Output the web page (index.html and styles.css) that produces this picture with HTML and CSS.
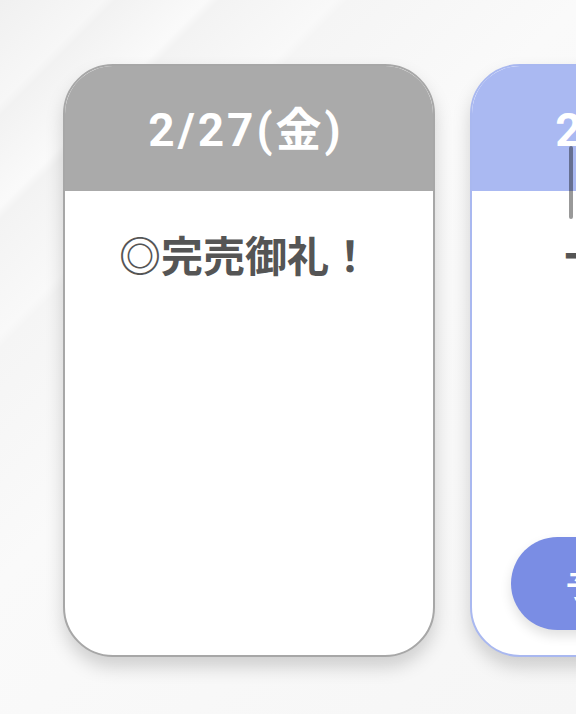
FILE: index.html
```html
<!DOCTYPE html>
<html lang="ja">
<head>
<meta charset="utf-8">
<title>公演日程</title>
<link rel="stylesheet" href="styles.css">
</head>
<body>
<main class="track">
  <article class="card card--sold">
    <header class="card__head">2/27(金)</header>
    <div class="card__body">
      <p class="card__msg">◎完売御礼！</p>
    </div>
  </article>
  <article class="card card--open">
    <header class="card__head">2/28(土)</header>
    <div class="card__body">
      <p class="card__msg">一般受付!</p>
      <a class="card__btn" href="#">予約はこちら</a>
    </div>
    <span class="card__cursor"></span>
  </article>
</main>
</body>
</html>
```
FILE: styles.css
```css
html, body {
  margin: 0;
  padding: 0;
  width: 576px;
  height: 714px;
  overflow: hidden;
}
body {
  font-family: "Noto Sans CJK JP", "Noto Sans", sans-serif;
  background:
    linear-gradient(135deg,
      #f0f0f0 0%, #f7f7f7 8%, #f2f2f2 9%, #fafafa 16%,
      #f3f3f3 17%, #f9f9f9 26%, #f5f5f5 27%, #fafafa 45%,
      #f8f8f8 70%, #f6f6f6 100%);
}
.track {
  display: flex;
  gap: 35px;
  padding: 64px 0 0 63px;
  width: max-content;
}
.card {
  position: relative;
  box-sizing: border-box;
  width: 372px;
  height: 593px;
  border: 2px solid #a7a7a7;
  border-radius: 50px;
  background: #fff;
  overflow: hidden;
  display: flex;
  flex-direction: column;
  box-shadow: 0 10px 18px rgba(0, 0, 0, 0.17);
}
.card__head {
  height: 125px;
  flex: none;
  display: flex;
  align-items: center;
  justify-content: center;
  background: #aaaaaa;
  color: #fff;
  font-family: Roboto, "Noto Sans CJK JP", sans-serif;
  font-weight: 700;
  font-size: 46px;
  letter-spacing: 3px;
  padding-right: 6px;
  padding-top: 2px;
  box-sizing: border-box;
  line-height: 1;
}
.card__body {
  flex: 1;
  display: flex;
  flex-direction: column;
  align-items: center;
}
.card__msg {
  margin: 33px 8px 0 0;
  font-size: 42px;
  line-height: 60px;
  font-weight: 700;
  color: #555;
  letter-spacing: 0;
}
.card--open {
  border-color: #a9b8f0;
}
.card--open .card__head {
  background: #aab9f2;
}
.card--open .card__msg {
  margin-right: 0;
}
.card__btn {
  margin-top: auto;
  margin-bottom: 25px;
  width: 290px;
  height: 93px;
  border-radius: 47px;
  background: #7a8de4;
  color: #fff;
  font-size: 30px;
  font-weight: 700;
  text-decoration: none;
  display: flex;
  align-items: center;
  justify-content: center;
  box-shadow: 0 6px 12px rgba(0, 0, 0, 0.12);
}
.card__cursor {
  position: absolute;
  left: 97px;
  top: 80px;
  width: 4px;
  height: 73px;
  border-radius: 2px;
  background: rgba(0, 0, 0, 0.4);
}
```
